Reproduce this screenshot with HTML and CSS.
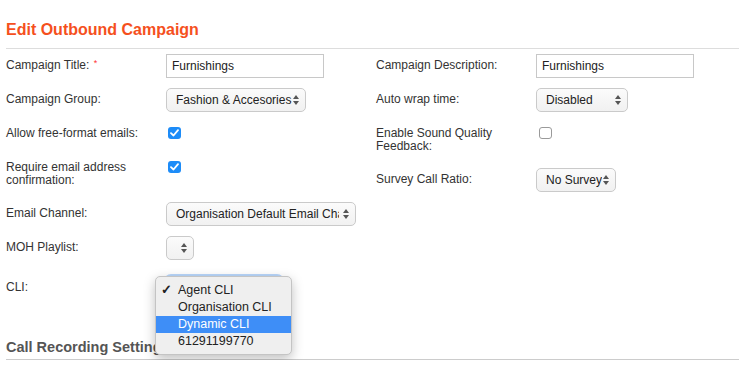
FILE: index.html
```html
<!DOCTYPE html>
<html lang="en">
<head>
	<meta charset="UTF-8">
	<title>Edit Outbound Campaign</title>
	<link rel="stylesheet" href="styles.css">
</head>
<body>
	<div class="page">
		<h2 class="title">Edit Outbound Campaign</h2>

		<div class="form">
			<!-- left column -->
			<div class="col">
				<div class="row">
					<label class="lbl">Campaign Title: <span class="req">*</span></label>
					<input class="txt" type="text" value="Furnishings">
				</div>
				<div class="row">
					<label class="lbl">Campaign Group:</label>
					<div class="sel w140"><span>Fashion &amp; Accesories</span><svg class="arr" width="6" height="10" viewBox="0 0 6 10"><polygon points="0,4 3,0 6,4"/><polygon points="0,6 3,10 6,6"/></svg></div>
				</div>
				<div class="row">
					<label class="lbl">Allow free-format emails:</label>
					<span class="chk on"><svg width="9" height="8" viewBox="0 0 9 8"><path d="M1 4.2 L3.5 6.5 L8 1.2"/></svg></span>
				</div>
				<div class="row">
					<label class="lbl">Require email address confirmation:</label>
					<span class="chk on"><svg width="9" height="8" viewBox="0 0 9 8"><path d="M1 4.2 L3.5 6.5 L8 1.2"/></svg></span>
				</div>
				<div class="row">
					<label class="lbl">Email Channel:</label>
					<div class="sel w190"><span>Organisation Default Email Channel</span><svg class="arr" width="6" height="10" viewBox="0 0 6 10"><polygon points="0,4 3,0 6,4"/><polygon points="0,6 3,10 6,6"/></svg></div>
				</div>
				<div class="row">
					<label class="lbl">MOH Playlist:</label>
					<div class="sel w28"><span></span><svg class="arr" width="6" height="10" viewBox="0 0 6 10"><polygon points="0,4 3,0 6,4"/><polygon points="0,6 3,10 6,6"/></svg></div>
				</div>
				<div class="row cli">
					<label class="lbl">CLI:</label>
					<div class="sel w116 focus">
						<ul class="menu">
							<li><i>&#10003;</i>Agent CLI</li>
							<li>Organisation CLI</li>
							<li class="hi">Dynamic CLI</li>
							<li>61291199770</li>
						</ul>
					</div>
				</div>
			</div>

			<!-- right column -->
			<div class="col">
				<div class="row">
					<label class="lbl">Campaign Description:</label>
					<input class="txt" type="text" value="Furnishings">
				</div>
				<div class="row">
					<label class="lbl">Auto wrap time:</label>
					<div class="sel w92"><span>Disabled</span><svg class="arr" width="6" height="10" viewBox="0 0 6 10"><polygon points="0,4 3,0 6,4"/><polygon points="0,6 3,10 6,6"/></svg></div>
				</div>
				<div class="row">
					<label class="lbl">Enable Sound Quality Feedback:</label>
					<span class="chk off"></span>
				</div>
				<div class="row">
					<label class="lbl">Survey Call Ratio:</label>
					<div class="sel w80"><span>No Survey</span><svg class="arr" width="6" height="10" viewBox="0 0 6 10"><polygon points="0,4 3,0 6,4"/><polygon points="0,6 3,10 6,6"/></svg></div>
				</div>
			</div>
		</div>

		<h3 class="section">Call Recording Settings</h3>
	</div>
</body>
</html>
```

FILE: styles.css
```css
*{margin:0;padding:0;box-sizing:border-box;}
body{font-family:"Liberation Sans",Arial,Helvetica,sans-serif;font-size:12px;color:#333;background:#fff;overflow:hidden;}
ul{list-style:none;}
.page{padding-left:6px;}

.title{font-size:16px;line-height:20px;font-weight:bold;color:#f5501d;padding:20px 0 8px;border-bottom:1px solid #ddd;}

.form{display:grid;grid-template-columns:370px 1fr;margin-top:5px;}
.row{display:flex;align-items:flex-start;margin-bottom:10px;min-height:24px;}
.lbl{width:160px;flex:none;padding:5px 14px 5px 0;line-height:13px;}
.req{color:#f33;font-size:9px;vertical-align:top;position:relative;top:-2px;margin-left:1px;}

.txt{width:158px;height:24px;border:1px solid #c8c8c8;padding:0 5px;font:12px "Liberation Sans",Arial,sans-serif;color:#222;outline:none;}

.sel{position:relative;height:24px;display:flex;align-items:center;border:1px solid #cacaca;border-radius:5px;background:linear-gradient(#fbfbfb,#f1f1f1);padding:0 16px 0 9px;color:#222;white-space:nowrap;}
.sel span{overflow:hidden;flex:1;}
.sel .arr{position:absolute;right:6px;top:6px;fill:#555;}
.w140{width:140px;padding:0 12px 0 9px;}
.w190{width:190px;}
.w28{width:28px;}
.w92{width:92px;}
.w80{width:80px;padding-right:13px;}
.w116{width:116px;}

.chk{width:13px;height:12px;border-radius:3px;margin:5px 0 0 2px;display:flex;align-items:center;justify-content:center;}
.chk.on{background:#1d8cf8;}
.chk.on svg path{fill:none;stroke:#fff;stroke-width:1.8;stroke-linecap:round;stroke-linejoin:round;}
.chk.off{background:#fff;border:1px solid #9a9a9a;margin-left:3px;}

.cli{padding-top:6px;}
.sel.focus{border-color:#9cc3f5;box-shadow:0 0 0 2px #b9d6fa;}
.menu{position:absolute;left:-12px;top:-1px;width:137px;padding:5px 0 4px;background:#efefef;border:1px solid #c4c4c4;border-radius:5px;box-shadow:0 4px 12px rgba(0,0,0,.25);z-index:5;font-size:12.5px;color:#222;}
.menu li{height:17px;line-height:17px;padding-left:22px;position:relative;}
.menu li i{position:absolute;left:5px;font-style:normal;font-weight:bold;}
.menu li.hi{background:#3e8ef7;color:#fff;}

.section{margin-top:28px;font-size:14.5px;line-height:18px;font-weight:bold;color:#555;padding-bottom:3px;border-bottom:1px solid #ccc;}
```
